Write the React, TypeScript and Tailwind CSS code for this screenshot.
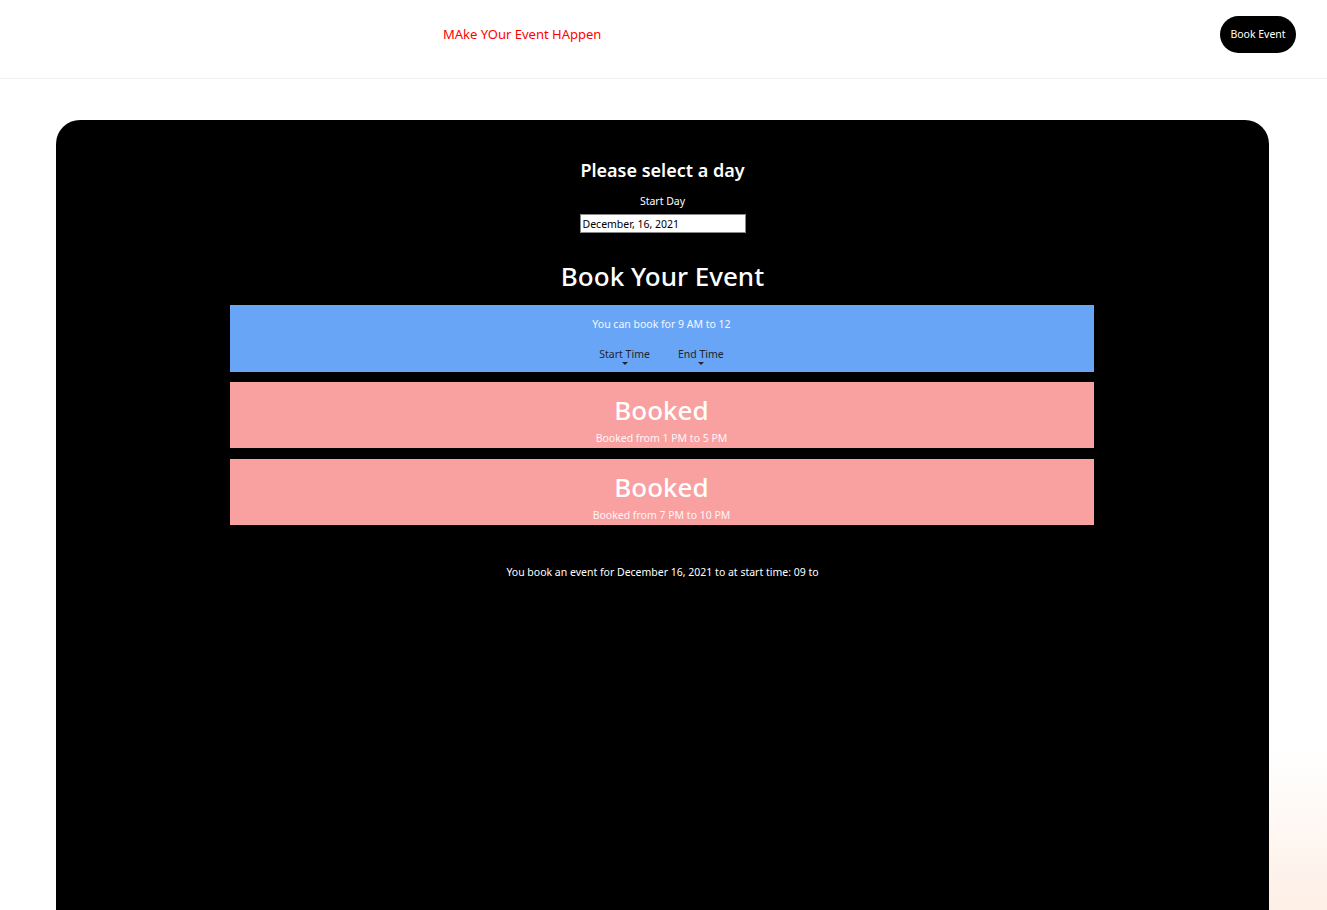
import { useState } from 'react';

const font = { fontFamily: '"Noto Sans", "Open Sans", sans-serif' };

function BookedSlot({ from, to }: { from: string; to: string }) {
  return (
    <div className="w-[864px] h-[66px] bg-[#f9a0a0] flex flex-col items-center text-white">
      <h2 className="text-[26px] leading-[32px] font-medium mt-[12px]">Booked</h2>
      <p className="text-[10.5px] leading-[14px] mt-[5px] text-[#fff6f6]">
        Booked from {from} to {to}
      </p>
    </div>
  );
}

function TimeSelect({ label }: { label: string }) {
  return (
    <div className="flex flex-col items-center text-[10.5px] leading-[13px] text-[#1f2430]">
      <span>{label}</span>
      <span className="w-0 h-0 border-l-[3px] border-r-[3px] border-t-[3px] border-l-transparent border-r-transparent border-t-[#1f2430] mt-[1px]" />
    </div>
  );
}

export default function App() {
  const [day] = useState('December, 16, 2021');

  return (
    <div className="relative min-h-[910px] bg-white overflow-hidden" style={font}>
      {/* soft corner glow */}
      <div className="absolute right-0 bottom-0 w-[80px] h-[170px] bg-gradient-to-b from-white to-[#fdeee4]" />

      {/* Header */}
      <header className="h-[79px] border-b border-[#f1f1f1] flex items-start justify-between pl-[443px] pr-[31px] pt-[16px]">
        <span className="text-[13px] leading-[18px] mt-[9px] text-[#ff0000]">MAke YOur Event HAppen</span>
        <button className="h-[37px] w-[76px] rounded-full bg-black text-white text-[10.5px]">
          Book Event
        </button>
      </header>

      {/* Main card */}
      <main className="relative ml-[56px] mr-[58px] mt-[41px] h-[800px] bg-black rounded-t-[24px] flex flex-col items-center text-white">
        <h1 className="text-[18px] leading-[24px] font-semibold mt-[38px]">Please select a day</h1>
        <label className="text-[10.5px] leading-[14px] mt-[12px]">Start Day</label>
        <input
          readOnly
          value={day}
          className="mt-[6px] w-[166px] h-[19px] bg-white text-black text-[10.5px] px-[2px] border border-[#8a8a8a] outline-none"
        />

        <h1 className="text-[26px] leading-[32px] font-medium mt-[27px]">Book Your Event</h1>

        <div className="mt-[13px] w-[864px] h-[67px] bg-[#69a5f6] flex flex-col items-center -translate-x-[1px]">
          <p className="text-[10.5px] leading-[14px] mt-[12px] text-[#f4f8ff]">You can book for 9 AM to 12</p>
          <div className="flex gap-[28px] mt-[17px]">
            <TimeSelect label="Start Time" />
            <TimeSelect label="End Time" />
          </div>
        </div>

        <div className="mt-[10px] flex flex-col gap-[11px] -translate-x-[1px]">
          <BookedSlot from="1 PM" to="5 PM" />
          <BookedSlot from="7 PM" to="10 PM" />
        </div>

        <p className="text-[10.5px] leading-[14px] mt-[40px]">
          You book an event for December 16, 2021 to at start time: 09 to
        </p>
      </main>
    </div>
  );
}
